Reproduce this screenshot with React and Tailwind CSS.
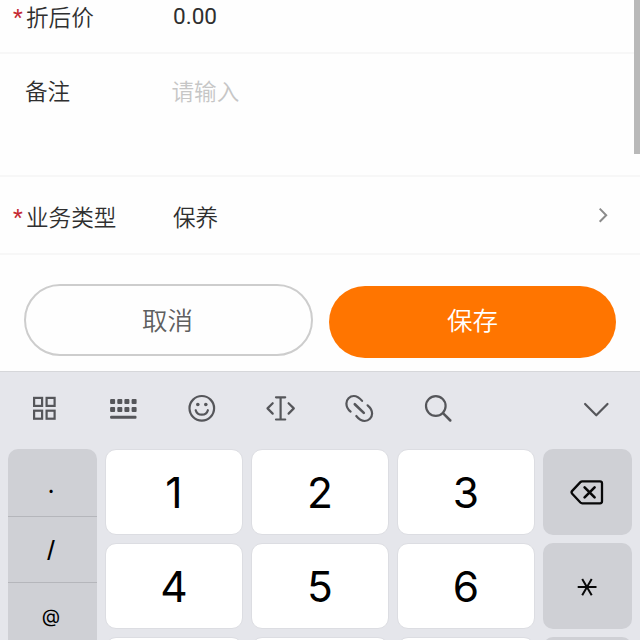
const iconProps = {
  fill: "none",
  stroke: "#55565a",
  strokeWidth: 2.2,
  strokeLinecap: "round",
  strokeLinejoin: "round",
  width: 32,
  height: 32,
  viewBox: "0 0 32 32",
};

function GridIcon() {
  return (
    <svg {...iconProps} strokeLinejoin="miter">
      <rect x="6.1" y="5.9" width="8" height="8" />
      <rect x="18.6" y="5.9" width="8" height="8" />
      <rect x="6.1" y="18.7" width="8" height="8" />
      <rect x="18.6" y="18.7" width="8" height="8" />
    </svg>
  );
}

function KeyboardIcon() {
  const columns = [3.1, 10.3, 17.4, 24.6];
  return (
    <svg {...iconProps} fill="#55565a" stroke="none">
      {columns.map((x) => (
        <g key={x}>
          <rect x={x} y="7" width="5" height="5" rx="1" />
          <rect x={x} y="14.9" width="5" height="5" rx="1" />
        </g>
      ))}
      <rect x="3.1" y="23.8" width="26.4" height="3" rx="1" />
    </svg>
  );
}

function SmileIcon() {
  return (
    <svg {...iconProps}>
      <circle cx="15.8" cy="16.3" r="12.3" />
      <path d="M9.7 18.2a6.3 6 0 0 0 12.2 0" />
      <circle cx="11.8" cy="12.5" r="1.8" fill="#55565a" stroke="none" />
      <circle cx="19.8" cy="12.5" r="1.8" fill="#55565a" stroke="none" />
    </svg>
  );
}

function CursorIcon() {
  return (
    <svg {...iconProps}>
      <path d="M12 5.3h9.2M16.6 5.3v22.2M12 27.5h9.2M8.7 11.2l-5.2 5.2 5.2 5.2M24.6 11.2l5.2 5.2-5.2 5.2" />
    </svg>
  );
}

function LinkIcon() {
  return (
    <svg {...iconProps}>
      <path d="M19.1 8.9C16.3 5.6 13.8 4 10.8 4a7.4 7.4 0 0 0-7.4 7.4c0 3.2 1.5 5.9 4.2 8.2" />
      <path d="M13.3 24c2.6 3.3 5.1 5 8.4 5a7.4 7.4 0 0 0 7.4-7.4c0-3.2-1.6-5.9-4.5-8.3" />
      <path d="M11.8 12.2l9 8.7" strokeWidth="2.6" />
    </svg>
  );
}

function SearchIcon() {
  return (
    <svg {...iconProps}>
      <circle cx="13.8" cy="14" r="9.8" />
      <path d="M21 21.2l7.3 7.3" strokeWidth="2.5" />
    </svg>
  );
}

function ChevronDownIcon() {
  return (
    <svg {...iconProps}>
      <path d="M5.1 12L16.3 23.3 27.5 12" />
    </svg>
  );
}

function BackspaceIcon() {
  return (
    <svg className="relative -left-px" width="36" height="28" viewBox="0 0 36 28" fill="none" stroke="#080809" strokeWidth="2.3" strokeLinecap="round" strokeLinejoin="round">
      <path d="M13.2 3.3H31q2 0 2 2v18q0 2-2 2H13.2q-1 0-1.8-.8L3.2 15.7q-1.3-1.4 0-2.8l8.2-8.8q.8-.8 1.8-.8z" />
      <path d="M15.6 9.3l10 10M25.6 9.3l-10 10" strokeWidth="2.6" />
    </svg>
  );
}

function AsteriskIcon() {
  return (
    <svg className="relative -left-px top-px" width="20" height="20" viewBox="0 0 20 20" fill="none" stroke="#080809" strokeWidth="2">
      <path d="M.7 10h18.8M5.2 2l9.5 16.2M14.7 2L5.2 18.2" />
    </svg>
  );
}

function Field({ label, required, children, className }) {
  return (
    <div className={`flex shrink-0 border-b-2 border-[#f7f7f7] pl-[13px] ${className}`}>
      <div className="flex w-[160px]">
        <span className="-mt-px w-[13px] font-normal text-[#c52a35]">{required ? "*" : ""}</span>
        <span className={required ? "" : "-ml-px"}>{label}</span>
      </div>
      {children}
    </div>
  );
}

function NumberKey({ children }) {
  return (
    <div className="flex h-[86px] items-center justify-center rounded-[11px] border border-[#dcdde2] bg-white pt-[2px] font-['Inter','Noto_Sans',sans-serif] text-[42.5px] leading-none font-normal text-black">
      {children}
    </div>
  );
}

function SideKey({ children }) {
  return (
    <div className="flex h-[86px] items-center justify-center rounded-[10px] bg-[#cfd0d5]">
      {children}
    </div>
  );
}

export default function App() {
  return (
    <div className="relative flex h-[640px] w-[640px] flex-col overflow-hidden bg-[#fefefe] font-['Roboto','Noto_Sans_CJK_SC',sans-serif] text-[22.6px] leading-[34px] font-[350] text-[#2f2f2f]">
      <Field label="折后价" required className="h-[54px] pt-[2px]">
        <span className="-mt-[2px] font-normal">0.00</span>
      </Field>
      <Field label="备注" className="h-[123px] pt-[22px]">
        <span className="-ml-[1.5px] text-[#c6c6c6]">请输入</span>
      </Field>
      <Field label="业务类型" required className="h-[78px] pt-[25px]">
        <span>保养</span>
        <svg className="mr-[28px] ml-auto mt-[4px]" width="18" height="18" viewBox="0 0 18 18" fill="none" stroke="#8b8b8b" strokeWidth="2">
          <path d="M5.7 2.6l6.5 6.6-6.5 6.6" />
        </svg>
      </Field>

      <div className="flex h-[116px] shrink-0 gap-4 pr-6 pl-6 pt-[29px] text-[25.5px]">
        <button className="flex h-[72px] w-[289px] items-center justify-center rounded-full border-2 border-[#cdcdcd] pt-[2px] pr-[2px] text-[#5f5f5f]">
          取消
        </button>
        <button className="mt-[2px] flex h-[72px] w-[287px] items-center justify-center rounded-full bg-[#ff7500] pb-[2px] text-white">
          保存
        </button>
      </div>

      <div className="h-[269px] shrink-0 border-t border-[#d6d7da] bg-[#e5e6eb]">
        <div className="flex h-[77px] items-center pr-[28px] pl-[28px] pb-[6px]">
          <div className="flex gap-[46.8px]">
            <GridIcon />
            <KeyboardIcon />
            <SmileIcon />
            <CursorIcon />
            <LinkIcon />
            <SearchIcon />
          </div>
          <div className="ml-auto">
            <ChevronDownIcon />
          </div>
        </div>
        <div className="grid grid-cols-[89px_1fr_89px] gap-2 px-2">
          <div className="h-[280px] overflow-hidden rounded-t-[10px] bg-[#cfd0d5] font-['Inter','Noto_Sans',sans-serif] text-black">
            <div className="flex h-[68px] items-center justify-center border-b border-[#b5b6bb] pt-[4px] pr-[3px] text-[22px] font-medium">.</div>
            <div className="flex h-[66px] items-center justify-center border-b border-[#b5b6bb] pr-[3px] pt-px text-[23px] font-medium">/</div>
            <div className="flex h-[66px] items-center justify-center pr-[3px] pt-[2px] text-[19px] font-normal">@</div>
          </div>
          <div className="grid auto-rows-[86px] grid-cols-3 gap-2">
            {["1", "2", "3", "4", "5", "6"].map((digit) => (
              <NumberKey key={digit}>{digit}</NumberKey>
            ))}
            <NumberKey />
            <NumberKey />
            <NumberKey />
          </div>
          <div className="flex flex-col gap-2">
            <SideKey><BackspaceIcon /></SideKey>
            <SideKey><AsteriskIcon /></SideKey>
            <SideKey />
          </div>
        </div>
      </div>

      <div className="absolute top-0 right-0 h-[154px] w-[6px] bg-[#b9b9b9]" />
    </div>
  );
}
